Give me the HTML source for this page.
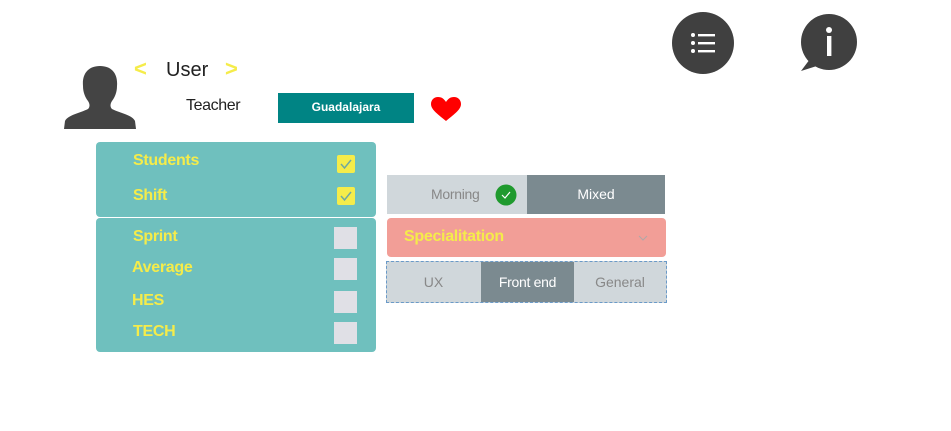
<!DOCTYPE html>
<html><head><style>
body{margin:0;width:951px;height:431px;background:#fff;position:relative;font-family:"Liberation Sans",sans-serif;overflow:hidden}
.a{position:absolute}
.y{color:#f5ec4a;font-weight:bold;font-size:16px;letter-spacing:-0.3px}
.cb{position:absolute;width:18px;height:18px;background:#f5ec4a;border-radius:2px}
.eb{position:absolute;left:334px;width:23px;height:22px;background:#e0e0e6}
</style></head><body>
<svg class="a" style="left:62px;top:64px" width="76" height="66" viewBox="0 0 76 66">
<path d="M38 2c-12 0-18 8-17 20 0 6 2 11 5 15 2 3 2 6 0 8-8 4-20 6-23 12l-1 8h72l-1-8c-3-6-15-8-23-12-2-2-2-5 0-8 3-4 5-9 5-15 1-12-5-20-17-20z" fill="#444"/>
</svg>
<div class="a" style="left:134px;top:56px;color:#f5ec4a;font-size:22px;font-weight:bold">&lt;</div>
<div class="a" style="left:166px;top:59px;color:#222;font-size:20px">User</div>
<div class="a" style="left:225px;top:56px;color:#f5ec4a;font-size:22px;font-weight:bold">&gt;</div>
<div class="a" style="left:186px;top:97px;color:#222;font-size:16px;letter-spacing:-0.4px">Teacher</div>
<div class="a" style="left:278px;top:93px;width:136px;height:30px;background:#008484;color:#fff;font-size:12px;font-weight:bold;text-align:center;line-height:28px">Guadalajara</div>
<svg class="a" style="left:430px;top:96px" width="32" height="26" viewBox="0 0 32 26"><path d="M16 25C6 17 1 13 1 8 1 4 4 1 8 1c4 0 6 2 8 5 2-3 4-5 8-5 4 0 7 3 7 7 0 5-5 9-15 17z" fill="#f00"/></svg>
<svg class="a" style="left:672px;top:12px" width="62" height="62"><circle cx="31" cy="31" r="31" fill="#404040"/><g fill="#fff"><circle cx="21" cy="23" r="2"/><circle cx="21" cy="31" r="2"/><circle cx="21" cy="39" r="2"/><rect x="26" y="22" width="17" height="2.4"/><rect x="26" y="30" width="17" height="2.4"/><rect x="26" y="38" width="17" height="2.4"/></g></svg>
<svg class="a" style="left:798px;top:13px" width="62" height="60"><circle cx="31" cy="29" r="28" fill="#404040"/><path d="M12 46L3 58 22 52z" fill="#404040"/><circle cx="31" cy="17" r="3" fill="#fff"/><rect x="29" y="23" width="4.4" height="20" fill="#fff"/></svg>
<div class="a" style="left:96px;top:142px;width:280px;height:36px;background:#6fc0be;border-radius:4px 4px 0 0"></div>
<div class="a" style="left:96px;top:178px;width:280px;height:39px;background:#6fc0be;border-radius:0 0 4px 4px"></div>
<div class="a" style="left:96px;top:218px;width:280px;height:134px;background:#6fc0be;border-radius:4px"></div>
<div class="a y" style="left:133px;top:152px">Students</div>
<div class="a y" style="left:133px;top:187px">Shift</div>
<div class="a y" style="left:133px;top:228px">Sprint</div>
<div class="a y" style="left:132px;top:259px">Average</div>
<div class="a y" style="left:132px;top:292px">HES</div>
<div class="a y" style="left:133px;top:323px">TECH</div>
<div class="cb" style="left:337px;top:155px"><svg width="18" height="18"><path d="M4 9l3.5 4L14 5" stroke="#6fa8a0" stroke-width="1.5" fill="none"/></svg></div>
<div class="cb" style="left:337px;top:187px"><svg width="18" height="18"><path d="M4 9l3.5 4L14 5" stroke="#6fa8a0" stroke-width="1.5" fill="none"/></svg></div>
<div class="eb" style="top:227px"></div><div class="eb" style="top:258px"></div><div class="eb" style="top:291px"></div><div class="eb" style="top:322px"></div>
<div class="a" style="left:387px;top:175px;width:140px;height:39px;background:#d0d7db;color:#888;font-size:14px;line-height:39px;letter-spacing:-0.3px"><span style="margin-left:44px">Morning</span></div>
<svg class="a" style="left:495px;top:184px" width="22" height="22"><circle cx="11" cy="11" r="10.5" fill="#1f9a2e"/><path d="M7 11l3 3 5-6" stroke="#fff" stroke-width="1.2" fill="none"/></svg>
<div class="a" style="left:527px;top:175px;width:138px;height:39px;background:#7b8a90;color:#fff;font-size:14px;line-height:39px;text-align:center">Mixed</div>
<div class="a" style="left:387px;top:218px;width:279px;height:39px;background:#f29e97;border-radius:4px"></div>
<div class="a y" style="left:404px;top:228px">Specialitation</div>
<svg class="a" style="left:638px;top:234px" width="10" height="8"><path d="M1 2l4 4 4-4" stroke="#b0a8a8" stroke-width="1" fill="none"/></svg>
<div class="a" style="left:386px;top:261px;width:279px;height:40px;border:1px dashed #6a9ac8;background:#d0d7db;font-size:14px;line-height:40px;color:#888">
<span class="a" style="left:0;width:93px;text-align:center">UX</span>
<span class="a" style="left:94px;width:93px;height:40px;background:#7b8a90;color:#fff;text-align:center;letter-spacing:-0.3px">Front end</span>
<span class="a" style="left:187px;width:92px;text-align:center">General</span>
</div>
</body></html>
